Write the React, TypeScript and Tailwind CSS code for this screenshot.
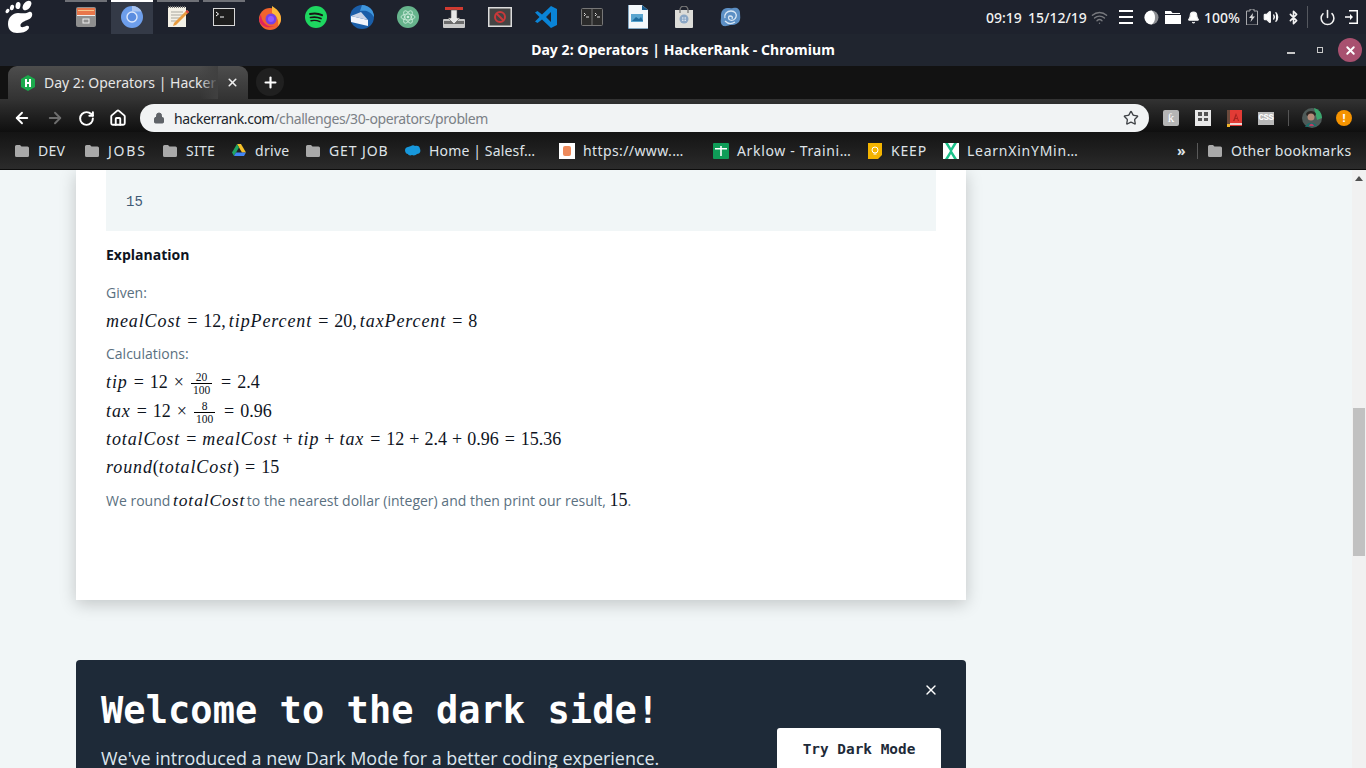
import { ArrowLeft, ArrowRight, RotateCw, Home, Lock, Star, X, Plus, Power, Bell, Bluetooth, Wifi, Volume2 } from "lucide-react";

// dock launcher icons, in order
function FilesIcon() {
  return (
    <svg width="22" height="22" viewBox="0 0 22 22">
      <rect x="1" y="1" width="20" height="20" rx="2" fill="#8f8f8f" />
      <rect x="2" y="2" width="18" height="7" fill="#e8764a" />
      <rect x="3" y="4" width="16" height="1" fill="#f7c58a" />
      <rect x="2" y="9" width="18" height="1" fill="#eeeeee" />
      <rect x="8" y="13" width="6" height="4" fill="none" stroke="#eeeeee" />
    </svg>
  );
}
function ChromiumIcon() {
  return (
    <svg width="22" height="22" viewBox="0 0 22 22">
      <circle cx="11" cy="11" r="11" fill="#6d9eeb" />
      <path d="M11 0a11 11 0 0 1 9.6 5.5H11z" fill="#a9c4f1" />
      <circle cx="11" cy="11" r="5" fill="#5b8de0" stroke="#dbe7fb" strokeWidth="1.4" />
    </svg>
  );
}
function EditorIcon() {
  return (
    <svg width="24" height="24" viewBox="0 0 24 24">
      <rect x="2" y="2" width="18" height="20" fill="#f4f1e6" />
      <path d="M2 2h18" stroke="#777" strokeWidth="2" strokeDasharray="1 1" />
      <path d="M5 7h12M5 10h12M5 13h10M5 16h8" stroke="#a9a79e" />
      <path d="M8 18 21 5l2 2-13 13-3 1z" fill="#e79b3f" />
      <path d="m21 5 2 2-1.5 1.5-2-2z" fill="#d44" />
    </svg>
  );
}
function TerminalIcon() {
  return (
    <svg width="22" height="18" viewBox="0 0 22 18">
      <rect x=".5" y=".5" width="21" height="17" fill="#1d1d1d" stroke="#d8d8d8" />
      <path d="m3 4 2.5 2L3 8" fill="none" stroke="#fff" />
      <path d="M7 9h4" stroke="#fff" />
    </svg>
  );
}
function FirefoxIcon() {
  return (
    <svg width="24" height="25" viewBox="0 0 24 25">
      <circle cx="12" cy="14" r="11" fill="#f2632d" />
      <path d="M14 1c5 3 9 7 9 13 0 2-1 5-3 7 1-6-1-10-6-13z" fill="#fbb83a" />
      <path d="M3 9c0 8 6 14 14 12-6 3-14 1-16-6z" fill="#e0245e" />
      <circle cx="13" cy="14" r="5.5" fill="#7542e5" />
      <circle cx="13" cy="14" r="3" fill="#9059ff" />
    </svg>
  );
}
function SpotifyIcon() {
  return (
    <svg width="22" height="22" viewBox="0 0 22 22">
      <circle cx="11" cy="11" r="11" fill="#1ed760" />
      <g fill="none" stroke="#191414" strokeLinecap="round">
        <path d="M5 8c4-1 8-1 12 1.2" strokeWidth="2" />
        <path d="M5.5 11.5c3.5-.8 7-.6 10.500 1" strokeWidth="1.7" />
        <path d="M6 14.700c3-.6 6-.4 9 1" strokeWidth="1.4" />
      </g>
    </svg>
  );
}
function MailIcon() {
  return (
    <svg width="24" height="24" viewBox="0 0 24 24">
      <circle cx="12" cy="12" r="12" fill="#1a5ea8" />
      <path d="M12 0a12 12 0 0 1 12 12c-4-6-8-7-14-6z" fill="#3f96dc" />
      <path d="m1 11 17 4v6L1 17z" fill="#f1f4fa" />
      <path d="m1 11 10-4 7 8z" fill="#c9d4e6" />
    </svg>
  );
}
function AtomIcon() {
  return (
    <svg width="22" height="22" viewBox="0 0 22 22">
      <circle cx="11" cy="11" r="11" fill="#66b48c" />
      <g fill="none" stroke="#cfeedd" strokeWidth=".8">
        <ellipse cx="11" cy="11" rx="7" ry="3" />
        <ellipse cx="11" cy="11" rx="7" ry="3" transform="rotate(60 11 11)" />
        <ellipse cx="11" cy="11" rx="7" ry="3" transform="rotate(120 11 11)" />
      </g>
      <circle cx="11" cy="11" r="1.3" fill="#cfeedd" />
    </svg>
  );
}
function InstallerIcon() {
  return (
    <svg width="22" height="23" viewBox="0 0 22 23">
      <rect x="0" y="13" width="22" height="9" rx="1" fill="#c9c9c9" />
      <rect x="1" y="15" width="20" height="3" fill="#6b6b6b" />
      <rect x="2" y="1" width="18" height="3" fill="#d13a30" />
      <path d="M8 4h6v8h3l-6 6-6-6h3z" fill="#e8e8e8" stroke="#555" strokeWidth=".6" />
    </svg>
  );
}
function BlockedIcon() {
  return (
    <svg width="24" height="20" viewBox="0 0 24 20">
      <rect x=".75" y=".75" width="22.5" height="18.5" fill="#444" stroke="#dcdcdc" strokeWidth="1.5" />
      <circle cx="12" cy="10" r="5" fill="none" stroke="#c9393a" strokeWidth="2" />
      <path d="m8.5 6.500 7 7" stroke="#c9393a" strokeWidth="2" />
    </svg>
  );
}
function VsCodeIcon() {
  return (
    <svg width="22" height="22" viewBox="0 0 22 22">
      <path d="M16 0 22 3v16l-6 3-9-8.500L2.500 17 0 15.500 4.500 11 0 6.500 2.500 5 7 8.500zM16 6l-5 5 5 5z" fill="#0a84d6" />
    </svg>
  );
}
function SplitTerminalIcon() {
  return (
    <svg width="22" height="18" viewBox="0 0 22 18">
      <rect x=".5" y=".5" width="21" height="17" rx="1" fill="#2b2b2b" stroke="#777" />
      <path d="M11 1v16" stroke="#777" />
      <path d="m3 5 1.5 1.5L3 8M14 5l1.5 1.5L14 8" fill="none" stroke="#ddd" />
      <path d="M5 9h3M16 9h3" stroke="#ddd" />
    </svg>
  );
}
function DrawDocIcon() {
  return (
    <svg width="20" height="24" viewBox="0 0 20 24">
      <path d="M0 0h14l6 5v19H0z" fill="#f4f8fb" />
      <path d="M14 0l6 5h-6z" fill="#17598a" />
      <path d="M0 0h.5v24H0zM0 23.500h20v.5H0z" fill="#17598a" />
      <rect x="3" y="9" width="12" height="8" fill="#5aa5cf" />
      <path d="m4 16 4-4 3 2 2-2 2 4z" fill="#1f6c9f" />
    </svg>
  );
}
function StoreIcon() {
  return (
    <svg width="20" height="22" viewBox="0 0 20 22">
      <path d="M1 4h18v17a1 1 0 0 1-1 1H2a1 1 0 0 1-1-1z" fill="#dcdcd8" />
      <path d="M6 7V4a4 4 0 0 1 8 0v3" fill="none" stroke="#777" strokeWidth="1.3" />
      <circle cx="10" cy="13" r="4.5" fill="#8aa6c4" />
      <circle cx="8.8" cy="12" r=".8" fill="#e8eef5" />
      <circle cx="11.2" cy="12" r=".8" fill="#e8eef5" />
      <circle cx="8.8" cy="14.3" r=".8" fill="#e8eef5" />
      <circle cx="11.2" cy="14.3" r=".8" fill="#e8eef5" />
    </svg>
  );
}
function SwirlIcon() {
  return (
    <svg width="21" height="20" viewBox="0 0 21 20">
      <path d="M4 2c3-2 6 0 9-1 4-1 7 1 7 5 0 3 1 6-1 9-3 3-6 3-9 3-3 1-6 2-8 0-2-3-1-5-1-8S1 4 4 2z" fill="#5c8fc4" />
      <path d="M5 11c-1-4 2-7 6-7s6 3 5 6-4 4-6 3-2-4 0-4 3 1 2 3M15 15c-3 2-7 2-10-1" fill="none" stroke="#d8e6f4" strokeWidth="1.3" />
    </svg>
  );
}

const dockIcons = [
  <FilesIcon />, <ChromiumIcon />, <EditorIcon />, <TerminalIcon />, <FirefoxIcon />,
  <SpotifyIcon />, <MailIcon />, <AtomIcon />, <InstallerIcon />, <BlockedIcon />,
  <VsCodeIcon />, <SplitTerminalIcon />, <DrawDocIcon />, <StoreIcon />, <SwirlIcon />,
];

function GnomeFoot() {
  return (
    <svg width="28" height="34" viewBox="0 0 28 34">
      <path d="M3 24C3 17 8 13 13 13c4 0 8 1 11-1 2-1 4 1 3 4-1 3-5 4-7 5-3 1-5 3-4.500 5 .5 2 3.500 1 5.500 0s4 0 2.500 3C21 32 17 33 12 33 7 33 3 30 3 24z" fill="#fff" />
      <ellipse cx="2.500" cy="11" rx="1.700" ry="2.400" fill="#fff" transform="rotate(30 2.500 11)" />
      <ellipse cx="7" cy="7.500" rx="2" ry="2.800" fill="#fff" transform="rotate(15 7 7.500)" />
      <ellipse cx="13" cy="5.500" rx="2.400" ry="3.600" fill="#fff" transform="rotate(10 13 5.500)" />
      <ellipse cx="22" cy="5.500" rx="3.500" ry="5.500" fill="#fff" transform="rotate(40 22 5.500)" />
    </svg>
  );
}

function TopBar() {
  return (
    <div className="h-[34px] bg-[#1e222d] flex items-stretch text-[#f2f2f2] shrink-0">
      <div className="w-[62px] flex items-center pl-[5px]">
        <GnomeFoot />
      </div>
      <div className="flex">
        {dockIcons.map((icon, i) => (
          <div key={i} className="w-[46px] flex flex-col items-center relative">
            {i === 1 && <div className="absolute top-0 left-[3px] w-[42px] h-[34px] bg-[#343a47]" />}
            {i < 4 && (
              <div className={i === 1 ? "absolute top-0 left-[3px] w-[42px] h-[2px] bg-white" : "absolute top-0 left-[3px] w-[42px] h-[2px] bg-[#6f7177]"} />
            )}
            <div className="relative h-[34px] pl-[2px] flex items-center justify-center">{icon}</div>
          </div>
        ))}
      </div>
      <div className="flex-1" />
      <div className="flex items-center text-[14px] font-medium pr-[8px] relative">
        <span className="w-[42px]">09:19</span>
        <span className="w-[63px]">15/12/19</span>
        <Wifi size={17} strokeWidth={2} className="text-[#77797e] w-[17px]" />
        <div className="w-[14px] ml-[11px] flex flex-col gap-[4px]">
          <div className="h-[2px] bg-white" />
          <div className="h-[2px] bg-white" />
          <div className="h-[2px] bg-white" />
        </div>
        <svg className="ml-[11px]" width="15" height="15" viewBox="0 0 15 15">
          <circle cx="7.5" cy="7.5" r="7" fill="#8b8d91" />
          <path d="M7.500.5a7 7 0 0 0 0 14c2.500-1.500 3.500-4 3.500-7s-1-5.500-3.500-7z" fill="#fff" />
        </svg>
        <svg className="ml-[6px]" width="16" height="14" viewBox="0 0 16 14">
          <path d="M0 1h6l1.500 2H15v1H0z" fill="#fff" />
          <path d="M0 5h16v9H0z" fill="#fff" />
        </svg>
        <Bell size={13} fill="#fff" className="ml-[6px]" />
        <span className="ml-[4px] w-[40px]">100%</span>
        <svg className="ml-[2px]" width="12" height="16" viewBox="0 0 12 16">
          <path d="M4 0h4v2h3.500v14H.5V2H4z" fill="none" stroke="#a8a9ac" />
          <path d="M7 4 3 9h2.500L4.500 13 9 7.500H6.500z" fill="#d8d8d8" />
        </svg>
        <Volume2 size={16} fill="#fff" className="ml-[5px]" />
        <Bluetooth size={15} strokeWidth={2.6} className="ml-[7px]" />
        <div className="w-px h-[22px] bg-[#55585f] ml-[6px]" />
        <Power size={17} strokeWidth={2.2} className="ml-[11px]" />
        <svg className="ml-[9px]" width="13" height="14" viewBox="0 0 13 14">
          <path d="M4 .75h8.250v12.500H4" fill="none" stroke="#fff" strokeWidth="1.5" />
          <path d="M0 6.200h5V4l3 3-3 3V7.800H0z" fill="#fff" />
        </svg>
      </div>
    </div>
  );
}

function TitleBar() {
  return (
    <div className="h-[32px] bg-[#20252f] flex items-center relative shrink-0 pb-[2px]">
      <span className="flex-1 text-center text-white font-bold text-[14px] tracking-[0.05px]">Day 2: Operators | HackerRank - Chromium</span>
      <div className="absolute right-[4px] top-[4px] flex items-center">
        <div className="w-[8px] h-[2px] bg-[#c8c8c8] mt-[5px]" />
        <div className="w-[6px] h-[6px] border border-[#c8c8c8] ml-[22px]" />
        <div className="w-[24px] h-[24px] rounded-full bg-[#a8506f] ml-[15px] flex items-center justify-center">
          <X size={13} strokeWidth={3.5} className="text-white" />
        </div>
      </div>
    </div>
  );
}

function TabStrip() {
  return (
    <div className="h-[33px] bg-[#121212] flex items-end pl-[8px] shrink-0">
      <div className="w-[240px] h-[33px] rounded-t-[9px] bg-gradient-to-b from-[#4d4d4d] to-[#333333] flex items-center pl-[13px] relative">
        <svg width="14" height="16" viewBox="0 0 14 16">
          <path d="M7 0l7 4v8l-7 4-7-4V4z" fill="#1ba94c" />
          <path d="M4 4h2v3h2V4h2v8H8V9H6v3H4z" fill="#fff" />
        </svg>
        <span className="ml-[9px] text-[14px] text-[#e6e6e6] w-[172px] overflow-hidden whitespace-nowrap">Day 2: Operators | HackerRank</span>
        <div className="absolute left-[192px] top-0 w-[18px] h-[33px] bg-gradient-to-r from-transparent to-[#404040]" />
        <X size={13} strokeWidth={3} className="text-[#eeeeee] absolute left-[218px] top-[10px]" />
      </div>
      <div className="w-[28px] h-[28px] rounded-full bg-[#202020] ml-[8px] mb-[3px] flex items-center justify-center">
        <Plus size={17} strokeWidth={3} className="text-white" />
      </div>
    </div>
  );
}

function ToolBar() {
  return (
    <div className="h-[33px] bg-gradient-to-b from-[#333333] to-[#0f0f0f] flex items-start shrink-0">
      <div className="w-[140px] h-[28px] flex items-center text-white mt-[5px]">
        <ArrowLeft size={18} strokeWidth={2.5} className="ml-[13px]" />
        <ArrowRight size={18} strokeWidth={2.5} className="ml-[15px] text-[#6e6e6e]" />
        <RotateCw size={17} strokeWidth={2.8} className="ml-[14px]" />
        <Home size={18} strokeWidth={2.5} className="ml-[14px]" />
      </div>
      <div className="w-[1009px] h-[28px] mt-[5px] rounded-full bg-[#f1f3f4] flex items-center pl-[13px] relative">
        <Lock size={12} fill="#5f6368" className="text-[#5f6368]" />
        <span className="ml-[9px] text-[14px] tracking-[-0.4px] text-[#20252b]">hackerrank.com<span className="text-[#7b8086]">/challenges/30-operators/problem</span></span>
        <Star size={16} strokeWidth={2} className="absolute right-[10px] top-[6px] text-[#404347]" />
      </div>
      <div className="flex items-center h-[28px] mt-[5px] pl-[14px] gap-[16px]">
        <div className="w-[16px] h-[16px] rounded-[2px] bg-[#b5b5b5] text-white font-['Liberation_Serif',serif] text-[13px] leading-[16px] text-center">ƙ</div>
        <div className="w-[16px] h-[16px] bg-[#e8e8e8] grid grid-cols-2 gap-[2px] px-[3px] pt-[2px] pb-[5px]">
          <div className="bg-[#555555]" /><div className="bg-[#555555]" /><div className="bg-[#555555]" /><div className="bg-[#555555]" />
        </div>
        <svg width="15" height="17" viewBox="0 0 15 17">
          <rect width="15" height="16" fill="#e23b35" />
          <rect width="3" height="16" fill="#6b4a3c" />
          <rect x="3" y="13" width="12" height="2" fill="#f2d5d3" />
          <rect y="14" width="3" height="3" fill="#f0b429" />
          <path d="M9 3 6 11h1.500l.7-2h2.100l.7 2H12zM8.600 8 9.300 5.500 10 8z" fill="#a82320" />
        </svg>
        <div className="w-[16px] h-[13px] bg-[#b9b9b9] text-white font-bold font-['Liberation_Mono',monospace] text-[9px] tracking-[-0.4px] leading-[13px] text-center">CSS</div>
        <div className="w-px h-[16px] bg-[#555555] -ml-[2px]" />
        <svg className="-ml-[3px]" width="20" height="20" viewBox="0 0 20 20">
          <circle cx="10" cy="10" r="10" fill="#4e5a58" />
          <path d="M12 0a10 10 0 0 1 8 10l-5 2z" fill="#3aa76d" />
          <path d="M4 6c1-4 9-4 10 0l-1 2H5z" fill="#2a2522" />
          <circle cx="9" cy="9" r="3.500" fill="#b58b78" />
          <path d="M3 19c2-5 9-6 12-1z" fill="#1e6e6a" />
          <path d="M7 18c1-3 4-3 5 0z" fill="#c23b62" />
        </svg>
        <div className="w-[16px] h-[16px] rounded-full bg-[#f59300] text-white font-bold text-[11px] leading-[16px] text-center -ml-[2px]">!</div>
      </div>
    </div>
  );
}

function FolderIcon() {
  return (
    <svg width="14" height="12" viewBox="0 0 14 12" className="shrink-0">
      <path d="M1.500 0h3.500l1.500 1.500h6a1.500 1.500 0 0 1 1.500 1.500v7.500A1.500 1.500 0 0 1 12.500 12h-11A1.500 1.500 0 0 1 0 10.500v-9A1.500 1.500 0 0 1 1.500 0z" fill="#a9a9a9" />
    </svg>
  );
}

function Bookmark({ icon, label, w }: { icon: React.ReactNode; label: string; w: string }) {
  return (
    <div className={`${w} flex items-center shrink-0 whitespace-nowrap`}>
      {icon}
      <span className="ml-[9px]">{label}</span>
    </div>
  );
}

function BookmarksBar() {
  return (
    <div className="h-[38px] bg-gradient-to-b from-[#141414] to-[#2b2b2b] border-b border-[#0c0c0c] flex items-center pl-[15px] text-[14px] text-[#dfe3e8] tracking-[0.3px] shrink-0">
      <Bookmark w="w-[70px]" label="DEV" icon={<FolderIcon />} />
      <Bookmark w="w-[78px] tracking-[1.8px]" label="JOBS" icon={<FolderIcon />} />
      <Bookmark w="w-[69px]" label="SITE" icon={<FolderIcon />} />
      <Bookmark
        w="w-[74px]"
        label="drive"
        icon={
          <svg width="14" height="13" viewBox="0 0 14 13" className="shrink-0">
            <path d="M5 0h4l5 8.500h-4z" fill="#f6c12a" />
            <path d="M5 0 0 8.500 2 12l5-8.500z" fill="#1fa463" />
            <path d="M2 12h10l2-3.500H4z" fill="#4285f4" />
          </svg>
        }
      />
      <Bookmark w="w-[99px] tracking-[0.9px]" label="GET JOB" icon={<FolderIcon />} />
      <Bookmark
        w="w-[154px] tracking-[0.15px]"
        label="Home | Salesf…"
        icon={
          <svg width="16" height="11" viewBox="0 0 16 11" className="shrink-0 -mr-px">
            <path d="M6 1c1-1 3-1 4 0 2-1 5 0 5 3 1 2 0 5-3 5-1 1-3 2-5 1-2 1-4 0-4-1C1 9 0 7 0 5s2-3 3-3 2-1 3-1z" fill="#1798dc" />
          </svg>
        }
      />
      <Bookmark
        w="w-[154px] tracking-[0.4px]"
        label="https://www.…"
        icon={
          <div className="w-[16px] h-[16px] bg-white flex items-center justify-center shrink-0 -mr-px">
            <div className="w-[8px] h-[10px] bg-[#ee8a5b] rounded-[2px]" />
          </div>
        }
      />
      <Bookmark
        w="w-[154px] tracking-[0.65px]"
        label="Arklow - Traini…"
        icon={
          <svg width="16" height="16" viewBox="0 0 16 16" className="shrink-0 -mr-px">
            <rect width="16" height="16" rx="1" fill="#0f9d58" />
            <path d="M2 5h12v1.500H2zM7.200 3h1.600v10H7.200z" fill="#fff" />
          </svg>
        }
      />
      <Bookmark
        w="w-[76px] tracking-[0.8px]"
        label="KEEP"
        icon={
          <svg width="16" height="16" viewBox="0 0 16 16" className="shrink-0 -mr-px">
            <path d="M1 0h14v12l-4 4H1z" fill="#f4b400" />
            <circle cx="8" cy="7" r="3" fill="none" stroke="#fff" />
            <path d="M6.500 11h3" stroke="#fff" />
          </svg>
        }
      />
      <Bookmark
        w="w-[234px] tracking-[0.75px]"
        label="LearnXinYMin…"
        icon={
          <svg width="16" height="16" viewBox="0 0 16 16" className="shrink-0 -mr-px">
            <rect width="16" height="16" fill="#fff" />
            <path d="m2 0 5 8-5 8h3l3-5 3 5h3L9 8l5-8h-3L8 5 5 0z" fill="#1bc28a" />
          </svg>
        }
      />
      <span className="font-bold w-[20px]">»</span>
      <div className="w-px h-[16px] bg-[#5a5a5a]" />
      <div className="ml-[10px] flex items-center whitespace-nowrap">
        <FolderIcon />
        <span className="ml-[9px]">Other bookmarks</span>
      </div>
    </div>
  );
}

// math text, set in a serif to stand in for the KaTeX fonts
function V({ children }: { children: React.ReactNode }) {
  return <span className="italic tracking-[0.9px]">{children}</span>;
}
function Eq() {
  return <span className="mx-[6px]">=</span>;
}
function Add() {
  return <span className="mx-[5px]">+</span>;
}
function Times() {
  return <span className="mx-[6px]">×</span>;
}
function Frac({ top, bottom }: { top: string; bottom: string }) {
  return (
    <span className="inline-flex flex-col items-center align-middle ml-[1px] mr-[3px] text-[11.5px] leading-[12px] w-[21px]">
      <span className="border-b border-black w-full text-center">{top}</span>
      <span>{bottom}</span>
    </span>
  );
}

const mathRow = "font-['Liberation_Serif',serif] text-[18px] text-[#0e141e] h-[28px] leading-[28px] whitespace-nowrap";

function Content() {
  return (
    <div className="flex-1 h-full overflow-hidden pl-[76px]">
      <div className="w-[890px] h-[430px] bg-white shadow-[0_4px_16px_rgba(0,0,0,0.2)] px-[30px] font-['Open_Sans',sans-serif] text-[14px] text-[#5a7080]">
        <div className="h-[61px] bg-[#f1f6f7] pl-[20px] pt-[22px] font-['Liberation_Mono',monospace] text-[14px] leading-[20px] text-[#3f5a75]">15</div>
        <div className="mt-[14px] h-[20px] leading-[20px] font-bold text-[#0e141e]">Explanation</div>
        <div className="mt-[18px] h-[20px] leading-[20px]">Given:</div>
        <div className={`mt-[4px] ${mathRow}`}>
          <V>mealCost</V><Eq />12<span>,</span><span className="ml-[3px]"><V>tipPercent</V></span><Eq />20<span>,</span><span className="ml-[3px]"><V>taxPercent</V></span><Eq />8
        </div>
        <div className="mt-[9px] h-[20px] leading-[20px]">Calculations:</div>
        <div className={`mt-[4px] ${mathRow}`}>
          <V>tip</V><Eq />12<Times /><Frac top="20" bottom="100" /><Eq />2.4
        </div>
        <div className={`mt-[1px] ${mathRow}`}>
          <V>tax</V><Eq />12<Times /><Frac top="8" bottom="100" /><Eq />0.96
        </div>
        <div className={mathRow}>
          <V>totalCost</V><Eq /><V>mealCost</V><Add /><V>tip</V><Add /><V>tax</V><Eq />12<Add />2.4<Add />0.96<Eq />15.36
        </div>
        <div className={mathRow}>
          <V>round</V>(<V>totalCost</V>)<Eq />15
        </div>
        <div className="mt-[9px] h-[20px] leading-[20px] whitespace-nowrap">
          We round <span className="-ml-px -mr-[2px] font-['Liberation_Serif',serif] text-[17.5px] text-[#0e141e]"><V>totalCost</V></span> to the nearest dollar (integer) and then print our result, <span className="font-['Liberation_Serif',serif] text-[18px] font-medium text-[#0e141e]">15</span>.
        </div>
      </div>
      <div className="w-[890px] h-[120px] mt-[60px] bg-[#1e2a38] rounded-[4px] pl-[25px] pr-[25px] relative">
        <X size={16} strokeWidth={2} className="absolute right-[27px] top-[22px] text-white" />
        <div className="pt-[27px] font-['DejaVu_Sans_Mono',monospace] font-bold text-[37px] tracking-[0.05px] leading-[48px] text-white whitespace-nowrap">Welcome to the dark side!</div>
        <div className="mt-[9px] font-['Open_Sans',sans-serif] text-[17.95px] leading-[28px] text-[#dde6ee] whitespace-nowrap">We've introduced a new Dark Mode for a better coding experience.</div>
        <div className="absolute left-[701px] top-[68px] w-[164px] h-[43px] bg-white rounded-[3px] flex items-center justify-center font-['DejaVu_Sans_Mono',monospace] font-bold text-[14.4px] text-[#1e2a38]">Try Dark Mode</div>
      </div>
    </div>
  );
}

function Scrollbar() {
  return (
    <div className="w-[14px] h-full bg-[#f1f1f1] shrink-0 flex flex-col items-center">
      <div className="mt-[6px] w-0 h-0 border-l-[4px] border-r-[4px] border-b-[5px] border-l-transparent border-r-transparent border-b-[#505050]" />
      <div className="mt-[227px] w-[12px] h-[148px] bg-[#c1c1c1]" />
    </div>
  );
}

export default function App() {
  return (
    <div className="h-screen w-full overflow-hidden flex flex-col bg-[#f1f6f7] font-['Noto_Sans',sans-serif]">
      <TopBar />
      <TitleBar />
      <TabStrip />
      <ToolBar />
      <BookmarksBar />
      <div className="flex-1 min-h-0 flex">
        <Content />
        <Scrollbar />
      </div>
    </div>
  );
}
